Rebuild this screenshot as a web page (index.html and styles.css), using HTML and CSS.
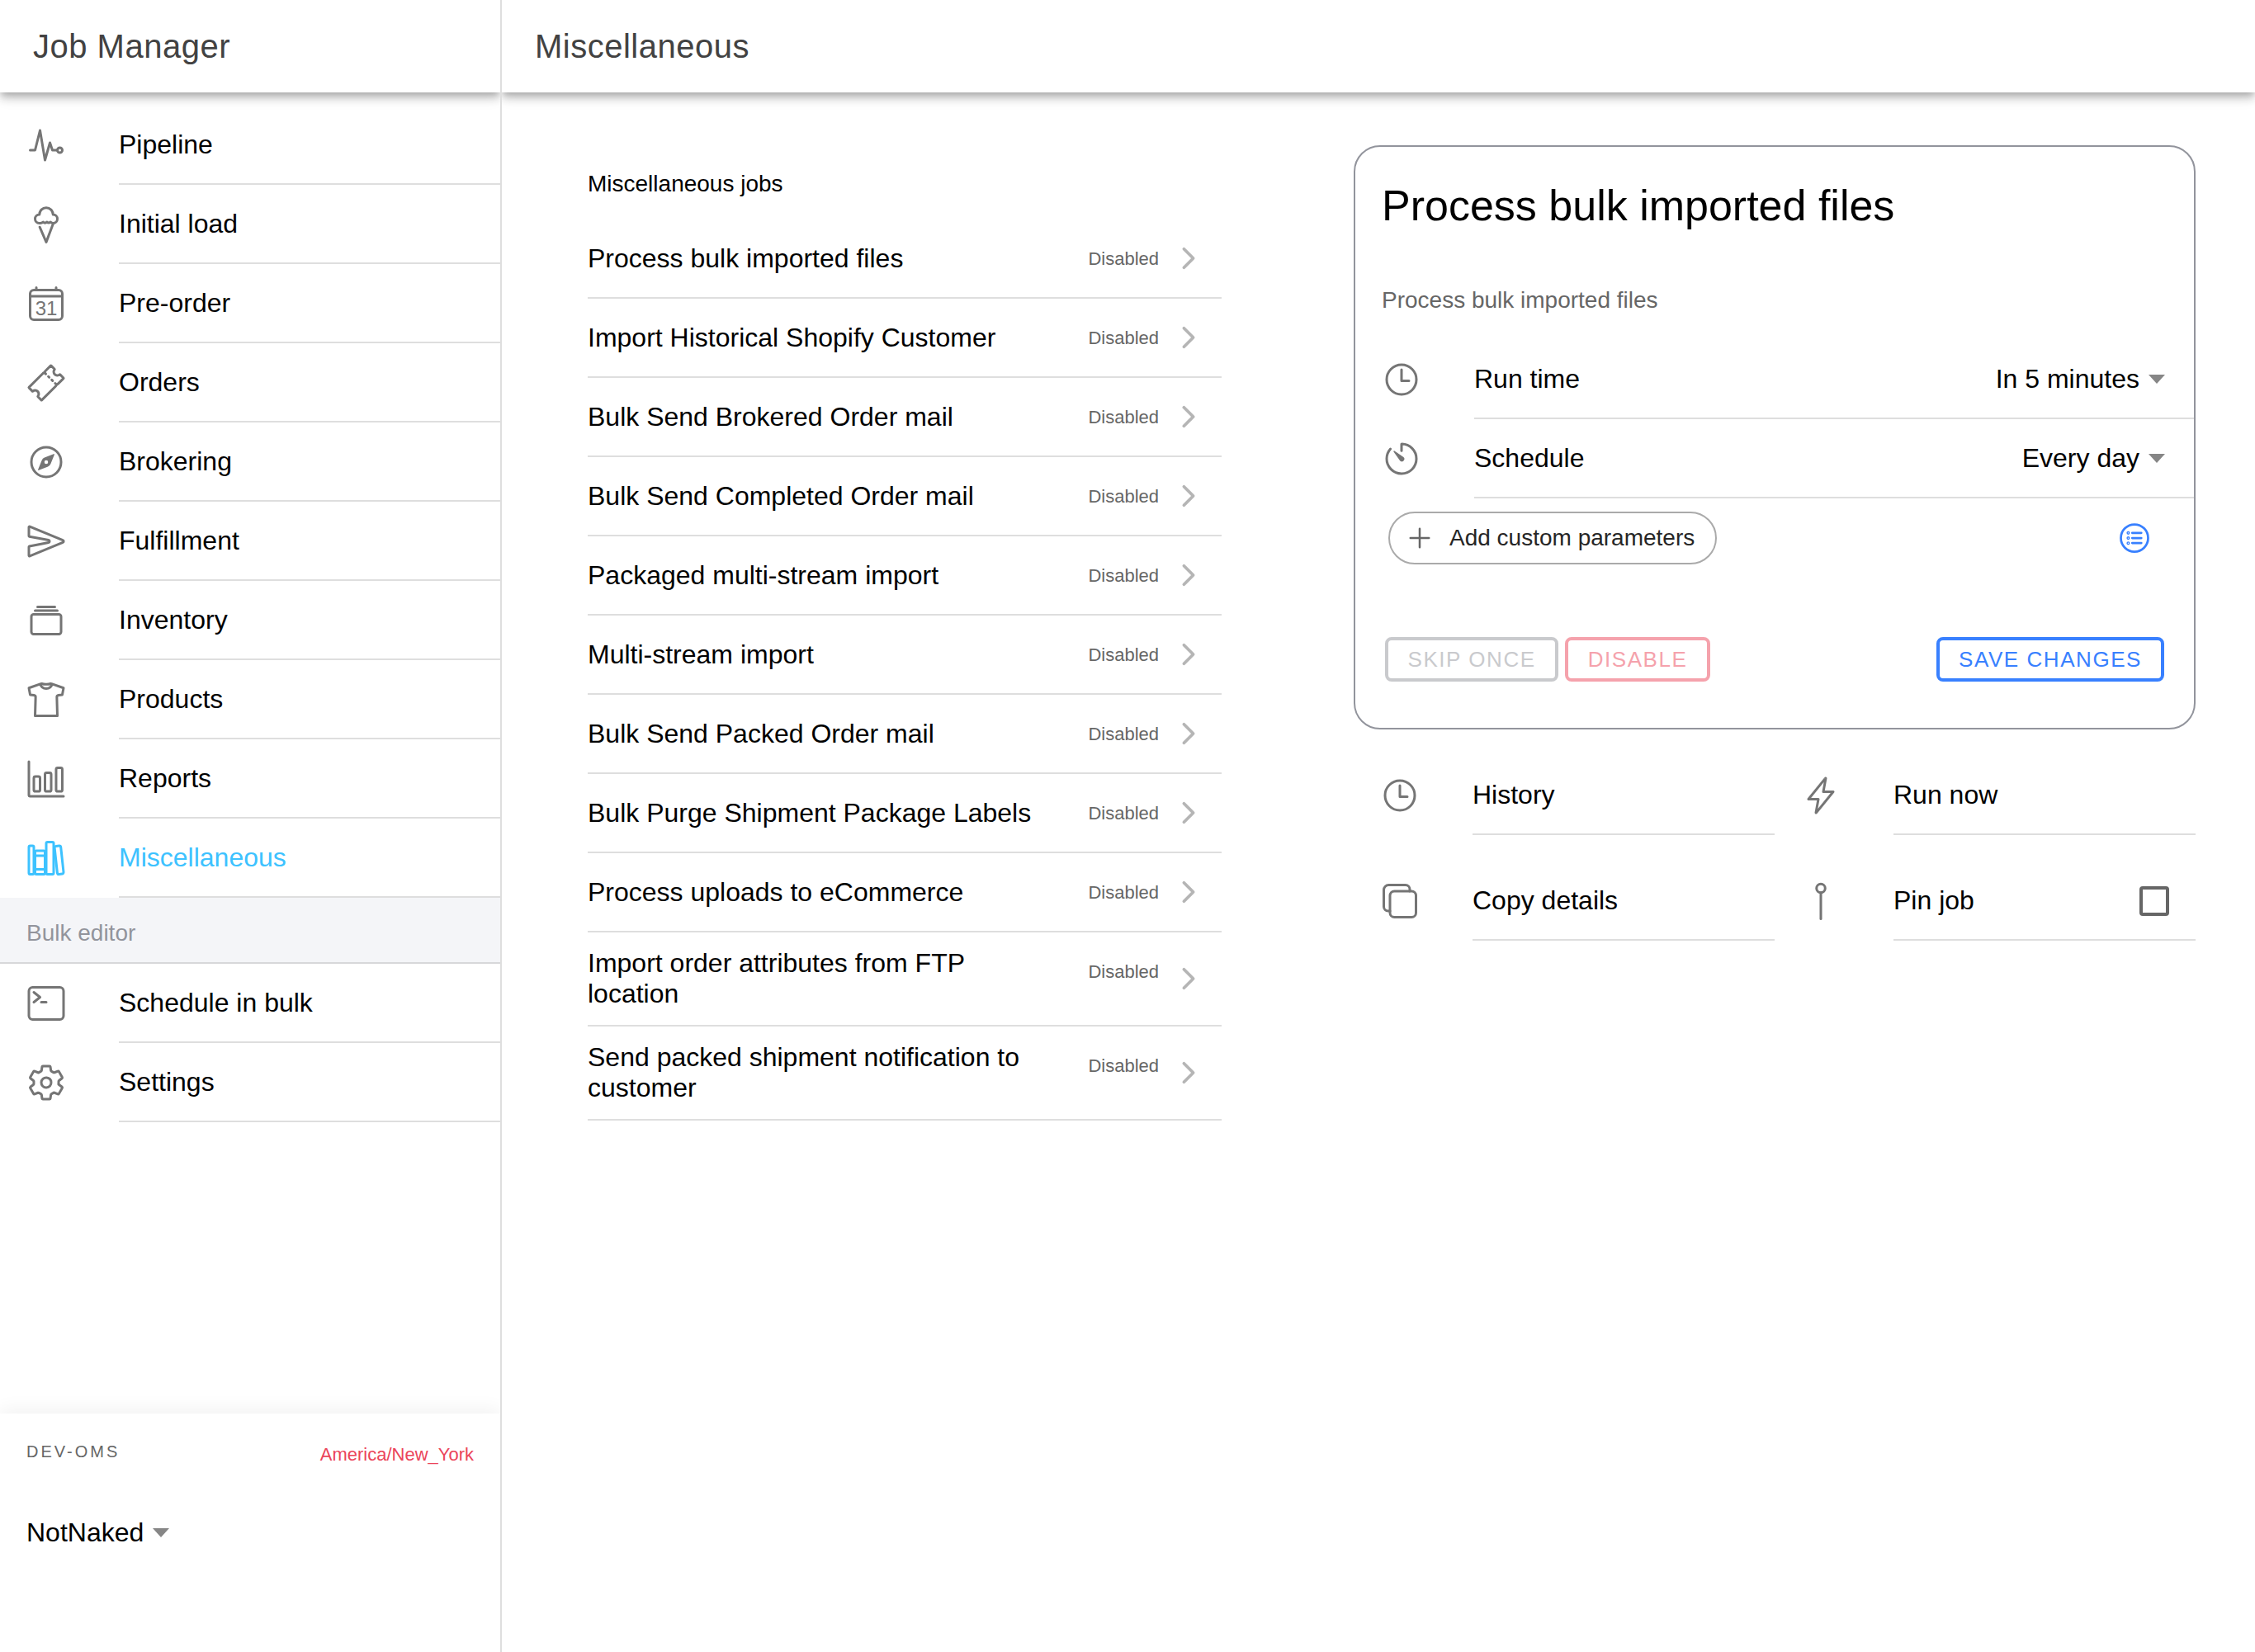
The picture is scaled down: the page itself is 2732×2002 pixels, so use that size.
FILE: index.html
```html
<!DOCTYPE html>
<html lang="en">
<head>
  <meta charset="UTF-8">
  <title>Job Manager - Miscellaneous</title>
  <link rel="stylesheet" href="styles.css">
</head>
<body>
<svg class="sprite" xmlns="http://www.w3.org/2000/svg">
  <symbol id="i-pulse" viewBox="0 0 512 512"><path class="ln" d="M48 320h64l64-256 64 384 64-224 32 96h64"/><circle class="ln" cx="432" cy="320" r="32"/></symbol>
  <symbol id="i-icecream" viewBox="0 0 512 512"><path class="ln" d="M172 290L256 484 344 250"/><path class="ln" d="M168 240A56 56 0 01168 128A88 88 0 01344 128A56 56 0 01344 240q-16 0-32-16q-24 20-48 0q-24 24-48 0q-20 20-48 16z"/></symbol>
  <symbol id="i-calendar" viewBox="0 0 512 512"><rect class="ln" x="48" y="80" width="416" height="384" rx="48"/><path class="ln" d="M128 48v32M384 48v32M464 160H48"/><text class="cal-num" x="256" y="410">31</text></symbol>
  <symbol id="i-ticket" viewBox="0 0 512 512"><path class="ln" d="M366.05 146a46.7 46.7 0 01-2.42-63.42 3.87 3.87 0 00-.22-5.26l-44.13-44.18a3.89 3.89 0 00-5.5 0l-70.34 70.34a23.62 23.62 0 00-5.71 9.24h0a23.66 23.66 0 01-14.95 15h0a23.7 23.7 0 00-9.25 5.71L33.14 313.78a3.89 3.89 0 000 5.5l44.13 44.13a3.87 3.87 0 005.26.22 46.69 46.69 0 0165.84 65.84 3.87 3.87 0 00.22 5.26l44.13 44.13a3.89 3.89 0 005.5 0l180.4-180.39a23.7 23.7 0 005.71-9.25h0a23.66 23.66 0 0114.95-15h0a23.62 23.62 0 009.24-5.71l70.34-70.34a3.89 3.89 0 000-5.5l-44.13-44.13a3.87 3.87 0 00-5.26-.22 46.7 46.7 0 01-63.42-2.42z"/><path class="ln" d="M250.5 140.44l-16.51-16.51M294.52 184.46l-11-11M338.54 228.49l-11-11.01M388.07 278.01l-16.51-16.51"/></symbol>
  <symbol id="i-compass" viewBox="0 0 512 512"><path class="ln" d="M448 256c0-106-86-192-192-192S64 150 64 256s86 192 192 192 192-86 192-192z"/><path class="fl" d="M350.67 150.93l-117.2 46.88a64 64 0 00-35.66 35.66l-46.88 117.2a8 8 0 0010.4 10.4l117.2-46.88a64 64 0 0035.66-35.66l46.88-117.2a8 8 0 00-10.4-10.4zM256 280a24 24 0 1124-24 24 24 0 01-24 24z"/></symbol>
  <symbol id="i-send" viewBox="0 0 512 512"><path class="ln" d="M470.3 271.15L43.16 447.31a7.83 7.83 0 01-11.16-7V327a8 8 0 016.51-7.86l247.62-47c17.36-3.29 17.36-28.15 0-31.44l-247.63-47a8 8 0 01-6.5-7.85V72.59c0-5.74 5.88-10.26 11.16-8L470.3 240.85a16.14 16.14 0 010 30.3z"/></symbol>
  <symbol id="i-albums" viewBox="0 0 512 512"><rect class="ln" x="64" y="176" width="384" height="256" rx="28.87"/><path class="ln" d="M144 80h224M112 128h288"/></symbol>
  <symbol id="i-shirt" viewBox="0 0 512 512"><path class="ln" d="M314.56 48s-22.78 8-58.56 8-58.56-8-58.56-8a31.94 31.94 0 00-10.57 1.8L32 104l16.63 88 48.88 5.52a24 24 0 0121.29 24.58L112 464h288l-6.8-241.9a24 24 0 0121.29-24.58l48.88-5.52L480 104 325.13 49.8a31.94 31.94 0 00-10.57-1.8zM333.31 52.66a80 80 0 01-154.62 0"/></symbol>
  <symbol id="i-chart" viewBox="0 0 512 512"><path class="ln" d="M32 32v432a16 16 0 0016 16h432"/><rect class="ln" x="96" y="224" width="80" height="192" rx="20"/><rect class="ln" x="240" y="176" width="80" height="240" rx="20"/><rect class="ln" x="383.64" y="112" width="80" height="304" rx="20"/></symbol>
  <symbol id="i-library" viewBox="0 0 512 512"><rect class="ln" x="32" y="96" width="64" height="368" rx="16"/><path class="ln" d="M112 224h128M112 400h128"/><rect class="ln" x="112" y="160" width="128" height="304" rx="16"/><rect class="ln" x="256" y="48" width="96" height="416" rx="16"/><path class="ln" d="M422.46 96.11l-40.4 4.25c-11.12 1.17-19.18 11.57-17.93 23.1l34.92 321.59c1.26 11.53 11.37 20 22.49 18.84l40.4-4.25c11.12-1.17 19.18-11.57 17.93-23.1L445 115c-1.31-11.58-11.42-20.06-22.54-18.89z"/></symbol>
  <symbol id="i-terminal" viewBox="0 0 512 512"><rect class="ln" x="32" y="48" width="448" height="416" rx="48"/><path class="ln" d="M96 112l80 64-80 64M192 240h64"/></symbol>
  <symbol id="i-settings" viewBox="0 0 512 512"><path class="ln" d="M262.29 192.31a64 64 0 1057.4 57.4 64.13 64.13 0 00-57.4-57.4zM416.39 256a154.34 154.34 0 01-1.53 20.79l45.21 35.46a10.81 10.81 0 012.45 13.75l-42.77 74a10.81 10.81 0 01-13.14 4.59l-44.9-18.08a16.11 16.11 0 00-15.17 1.75A164.48 164.48 0 01325 400.8a15.94 15.94 0 00-8.82 12.14l-6.73 47.89a11.08 11.08 0 01-10.68 9.17h-85.54a11.11 11.11 0 01-10.69-8.87l-6.72-47.82a16.07 16.07 0 00-9-12.22 155.3 155.3 0 01-21.46-12.57 16 16 0 00-15.11-1.71l-44.89 18.07a10.81 10.81 0 01-13.14-4.58l-42.77-74a10.8 10.8 0 012.45-13.75l38.21-30a16.05 16.05 0 006-14.08c-.36-4.17-.58-8.33-.58-12.5s.21-8.27.58-12.35a16 16 0 00-6.07-13.94l-38.19-30A10.81 10.81 0 0149.48 186l42.77-74a10.81 10.81 0 0113.14-4.59l44.9 18.08a16.11 16.11 0 0015.17-1.75A164.48 164.48 0 01187 111.2a15.94 15.94 0 008.82-12.14l6.73-47.89A11.08 11.08 0 01213.23 42h85.54a11.11 11.11 0 0110.69 8.87l6.72 47.82a16.07 16.07 0 009 12.22 155.3 155.3 0 0121.46 12.57 16 16 0 0015.11 1.71l44.89-18.07a10.81 10.81 0 0113.14 4.58l42.77 74a10.8 10.8 0 01-2.45 13.75l-38.21 30a16.05 16.05 0 00-6.05 14.08c.33 4.14.55 8.3.55 12.47z"/></symbol>
  <symbol id="i-time" viewBox="0 0 512 512"><path class="ln" d="M256 64C150 64 64 150 64 256s86 192 192 192 192-86 192-192S362 64 256 64z"/><path class="ln" d="M256 128v144h96"/></symbol>
  <symbol id="i-timer" viewBox="0 0 512 512"><path class="ln" d="M112.91 128A191.85 191.85 0 0064 254c-1.18 106.35 85.65 193.8 192 194 106.2.2 192-85.83 192-192 0-104.54-83.55-189.61-187.5-192a4.36 4.36 0 00-4.5 4.37V152"/><path class="fl" d="M233.38 278.63l-79-113a8.13 8.13 0 0111.32-11.32l113 79a32.5 32.5 0 01-37.25 53.26 33.21 33.21 0 01-8.07-7.94z"/></symbol>
  <symbol id="i-add" viewBox="0 0 512 512"><path class="ln" d="M256 112v288M400 256H112"/></symbol>
  <symbol id="i-list" viewBox="0 0 512 512"><path class="ln" d="M224 184h128M224 256h128M224 327h128"/><path class="ln" d="M448 256c0-106-86-192-192-192S64 150 64 256s86 192 192 192 192-86 192-192z"/><circle class="ln" cx="168" cy="184" r="8"/><circle class="ln" cx="168" cy="257" r="8"/><circle class="ln" cx="168" cy="328" r="8"/></symbol>
  <symbol id="i-flash" viewBox="0 0 512 512"><path class="ln" d="M315.27 33L96 304h128l-31.51 173.23a2.36 2.36 0 002.33 2.77h0a2.36 2.36 0 001.89-.95L416 208H288l31.66-173.25a2.45 2.45 0 00-2.44-2.75h0a2.42 2.42 0 00-1.95 1z"/></symbol>
  <symbol id="i-copy" viewBox="0 0 512 512"><rect class="ln" x="128" y="128" width="336" height="336" rx="57"/><path class="ln" d="M383.5 128l.5-24a56.16 56.16 0 00-56-56H112a64.19 64.19 0 00-64 64v216a56.16 56.16 0 0056 56h24"/></symbol>
  <symbol id="i-pin" viewBox="0 0 512 512"><circle class="ln" cx="256" cy="90" r="56"/><path class="ln" d="M256 146v338"/></symbol>
  <symbol id="i-chevron" viewBox="0 0 512 512"><path class="ln chev" d="M184 112l144 144-144 144"/></symbol>
</svg>

<aside class="sidebar">
  <header class="pane-header">Job Manager</header>
  <nav class="nav">
    <a class="nav-item"><svg class="icon"><use href="#i-pulse"/></svg><span class="nav-label">Pipeline</span></a>
    <a class="nav-item"><svg class="icon"><use href="#i-icecream"/></svg><span class="nav-label">Initial load</span></a>
    <a class="nav-item"><svg class="icon"><use href="#i-calendar"/></svg><span class="nav-label">Pre-order</span></a>
    <a class="nav-item"><svg class="icon"><use href="#i-ticket"/></svg><span class="nav-label">Orders</span></a>
    <a class="nav-item"><svg class="icon"><use href="#i-compass"/></svg><span class="nav-label">Brokering</span></a>
    <a class="nav-item"><svg class="icon"><use href="#i-send"/></svg><span class="nav-label">Fulfillment</span></a>
    <a class="nav-item"><svg class="icon"><use href="#i-albums"/></svg><span class="nav-label">Inventory</span></a>
    <a class="nav-item"><svg class="icon"><use href="#i-shirt"/></svg><span class="nav-label">Products</span></a>
    <a class="nav-item"><svg class="icon"><use href="#i-chart"/></svg><span class="nav-label">Reports</span></a>
    <a class="nav-item active"><svg class="icon"><use href="#i-library"/></svg><span class="nav-label">Miscellaneous</span></a>
    <div class="nav-divider">Bulk editor</div>
    <a class="nav-item"><svg class="icon"><use href="#i-terminal"/></svg><span class="nav-label">Schedule in bulk</span></a>
    <a class="nav-item"><svg class="icon"><use href="#i-settings"/></svg><span class="nav-label">Settings</span></a>
  </nav>
  <footer class="sidebar-footer">
    <div class="footer-top">
      <span class="overline">DEV-OMS</span>
      <span class="timezone">America/New_York</span>
    </div>
    <div class="store-select">NotNaked <span class="caret"></span></div>
  </footer>
</aside>

<main class="main">
  <header class="pane-header">Miscellaneous</header>
  <div class="content">
    <section class="jobs">
      <div class="jobs-head">Miscellaneous jobs</div>
      <div class="job-row"><span class="job-name">Process bulk imported files</span><span class="job-status">Disabled</span><svg class="chevron"><use href="#i-chevron"/></svg></div>
      <div class="job-row"><span class="job-name">Import Historical Shopify Customer</span><span class="job-status">Disabled</span><svg class="chevron"><use href="#i-chevron"/></svg></div>
      <div class="job-row"><span class="job-name">Bulk Send Brokered Order mail</span><span class="job-status">Disabled</span><svg class="chevron"><use href="#i-chevron"/></svg></div>
      <div class="job-row"><span class="job-name">Bulk Send Completed Order mail</span><span class="job-status">Disabled</span><svg class="chevron"><use href="#i-chevron"/></svg></div>
      <div class="job-row"><span class="job-name">Packaged multi-stream import</span><span class="job-status">Disabled</span><svg class="chevron"><use href="#i-chevron"/></svg></div>
      <div class="job-row"><span class="job-name">Multi-stream import</span><span class="job-status">Disabled</span><svg class="chevron"><use href="#i-chevron"/></svg></div>
      <div class="job-row"><span class="job-name">Bulk Send Packed Order mail</span><span class="job-status">Disabled</span><svg class="chevron"><use href="#i-chevron"/></svg></div>
      <div class="job-row"><span class="job-name">Bulk Purge Shipment Package Labels</span><span class="job-status">Disabled</span><svg class="chevron"><use href="#i-chevron"/></svg></div>
      <div class="job-row"><span class="job-name">Process uploads to eCommerce</span><span class="job-status">Disabled</span><svg class="chevron"><use href="#i-chevron"/></svg></div>
      <div class="job-row"><span class="job-name">Import order attributes from FTP location</span><span class="job-status">Disabled</span><svg class="chevron"><use href="#i-chevron"/></svg></div>
      <div class="job-row"><span class="job-name">Send packed shipment notification to customer</span><span class="job-status">Disabled</span><svg class="chevron"><use href="#i-chevron"/></svg></div>
    </section>

    <section class="detail">
      <div class="card">
        <h2 class="card-title">Process bulk imported files</h2>
        <p class="card-sub">Process bulk imported files</p>
        <div class="card-row">
          <svg class="icon"><use href="#i-time"/></svg>
          <div class="card-row-body"><span>Run time</span><span class="select-value">In 5 minutes <span class="caret"></span></span></div>
        </div>
        <div class="card-row">
          <svg class="icon"><use href="#i-timer"/></svg>
          <div class="card-row-body"><span>Schedule</span><span class="select-value">Every day <span class="caret"></span></span></div>
        </div>
        <div class="params-row">
          <button class="chip"><svg class="chip-icon"><use href="#i-add"/></svg>Add custom parameters</button>
          <svg class="list-icon"><use href="#i-list"/></svg>
        </div>
        <div class="card-actions">
          <div class="action-group">
            <button class="btn btn-muted">SKIP ONCE</button>
            <button class="btn btn-danger">DISABLE</button>
          </div>
          <button class="btn btn-primary">SAVE CHANGES</button>
        </div>
      </div>

      <div class="more-actions">
        <div class="more-item"><svg class="icon"><use href="#i-time"/></svg><div class="more-body">History</div></div>
        <div class="more-item"><svg class="icon"><use href="#i-flash"/></svg><div class="more-body">Run now</div></div>
        <div class="more-item"><svg class="icon"><use href="#i-copy"/></svg><div class="more-body">Copy details</div></div>
        <div class="more-item"><svg class="icon"><use href="#i-pin"/></svg><div class="more-body">Pin job <span class="checkbox"></span></div></div>
      </div>
    </section>
  </div>
</main>
</body>
</html>
```

FILE: styles.css
```css
* {
  box-sizing: border-box;
}
html, body {
  height: 100%;
}
body {
  margin: 0;
  display: flex;
  overflow: hidden;
  font-family: "Liberation Sans", Arial, sans-serif;
  font-size: 32px;
  color: #000;
  background: #fff;
}
.sprite {
  display: none;
}

/* icon strokes */
.ln {
  fill: none;
  stroke: currentColor;
  stroke-width: 32;
  stroke-linecap: round;
  stroke-linejoin: round;
}
.chev {
  stroke-width: 48;
}
.fl {
  fill: currentColor;
}
.cal-num {
  font-family: "Liberation Sans", Arial, sans-serif;
  font-size: 256px;
  text-anchor: middle;
  fill: currentColor;
}
.icon {
  flex: none;
  width: 48px;
  height: 48px;
  color: #757575;
}

/* panes */
.sidebar {
  flex: none;
  width: 608px;
  height: 2002px;
  display: flex;
  flex-direction: column;
  overflow: hidden;
  border-right: 2px solid #dedede;
}
.main {
  flex: 1;
  min-width: 0;
  overflow: hidden;
}
.pane-header {
  position: relative;
  height: 112px;
  line-height: 112px;
  padding-left: 40px;
  font-size: 40px;
  letter-spacing: .5px;
  color: #424242;
  box-shadow: 0 4px 8px -2px rgba(0, 0, 0, .2), 0 8px 10px 0 rgba(0, 0, 0, .14), 0 2px 20px 0 rgba(0, 0, 0, .12);
}

/* sidebar nav */
.nav {
  flex: 1;
  padding-top: 16px;
}
.nav-item {
  display: flex;
  align-items: center;
  height: 96px;
  padding-left: 32px;
}
.nav-label {
  flex: 1;
  height: 96px;
  line-height: 94px;
  margin-left: 64px;
  border-bottom: 2px solid #dedede;
}
.nav-item.active .icon,
.nav-item.active .nav-label {
  color: #3dc2ff;
}
.nav-divider {
  height: 80px;
  padding: 6px 0 0 32px;
  line-height: 74px;
  font-size: 28px;
  color: #92949c;
  background: #f4f5f8;
  border-bottom: 2px solid #d7d8da;
}

/* sidebar footer */
.sidebar-footer {
  height: 289px;
  padding: 35px 32px 0;
  box-shadow: 0 -6px 20px rgba(0, 0, 0, .05);
}
.footer-top {
  display: flex;
  justify-content: space-between;
  align-items: flex-start;
}
.overline {
  font-size: 20px;
  letter-spacing: 3px;
  color: #666;
}
.timezone {
  margin-top: 2px;
  font-size: 22px;
  color: #eb445a;
}
.store-select {
  margin-top: 63px;
  display: flex;
  align-items: center;
  gap: 11px;
}
.caret {
  display: inline-block;
  width: 0;
  height: 0;
  border-top: 11px solid #868686;
  border-left: 10px solid transparent;
  border-right: 10px solid transparent;
}

/* content area */
.content {
  display: flex;
  align-items: flex-start;
  gap: 160px;
  padding: 64px 72px 0 104px;
}
.jobs {
  flex: none;
  width: 768px;
}
.jobs-head {
  height: 90px;
  padding-top: 31px;
  line-height: 32px;
  font-size: 28px;
}
.job-row {
  display: flex;
  align-items: center;
  min-height: 96px;
  padding: 19px 20px 19px 0;
  border-bottom: 2px solid #dedede;
}
.job-name {
  flex: 1;
  padding-right: 40px;
}
.job-status {
  align-self: flex-start;
  margin-top: 16px;
  font-size: 22px;
  color: #666;
}
.chevron {
  flex: none;
  width: 40px;
  height: 40px;
  margin-left: 16px;
  color: #b5b5b5;
}

/* job detail card */
.detail {
  flex: none;
  width: 1020px;
}
.card {
  height: 708px;
  border: 2px solid #92949c;
  border-radius: 32px;
}
.card-title {
  margin: 41px 0 0 32px;
  font-size: 52px;
  font-weight: 400;
}
.card-sub {
  margin: 69px 0 32px 32px;
  font-size: 28px;
  color: #666;
}
.card-row {
  display: flex;
  align-items: center;
  height: 96px;
  padding-left: 32px;
}
.card-row-body {
  flex: 1;
  height: 96px;
  margin-left: 64px;
  padding-right: 35px;
  display: flex;
  justify-content: space-between;
  align-items: center;
  border-bottom: 2px solid #dedede;
}
.select-value {
  display: flex;
  align-items: center;
  gap: 11px;
}
.params-row {
  display: flex;
  justify-content: space-between;
  align-items: center;
  margin-top: 16px;
  padding: 0 50px 0 40px;
}
.chip {
  display: flex;
  align-items: center;
  gap: 16px;
  height: 64px;
  padding: 0 25px 0 16px;
  background: #fff;
  border: 2px solid #aaa;
  border-radius: 32px;
  font-family: inherit;
  font-size: 28px;
  color: #262626;
}
.chip-icon {
  width: 40px;
  height: 40px;
  color: #666;
}
.list-icon {
  width: 44px;
  height: 44px;
  color: #3880ff;
}
.card-actions {
  display: flex;
  justify-content: space-between;
  margin-top: 88px;
  padding: 0 36px;
}
.action-group {
  display: flex;
  gap: 8px;
}
.btn {
  height: 54px;
  padding: 0 23.5px;
  background: #fff;
  border: 4px solid;
  border-radius: 8px;
  font-family: inherit;
  font-size: 26px;
  letter-spacing: 1.56px;
}
.btn-muted {
  color: #c9cacd;
}
.btn-danger {
  color: #f5a2ac;
}
.btn-primary {
  padding: 0 23px;
  color: #3880ff;
}

/* history / run now / copy / pin */
.more-actions {
  display: grid;
  grid-template-columns: 510px 510px;
  row-gap: 32px;
  margin-top: 32px;
}
.more-item {
  display: flex;
  align-items: center;
  height: 96px;
  padding-left: 32px;
}
.more-body {
  flex: 1;
  height: 96px;
  margin-left: 64px;
  padding-right: 32px;
  display: flex;
  justify-content: space-between;
  align-items: center;
  border-bottom: 2px solid #dedede;
}
.checkbox {
  width: 36px;
  height: 36px;
  margin-top: 2px;
  border: 4px solid #666;
  border-radius: 4px;
}
```
